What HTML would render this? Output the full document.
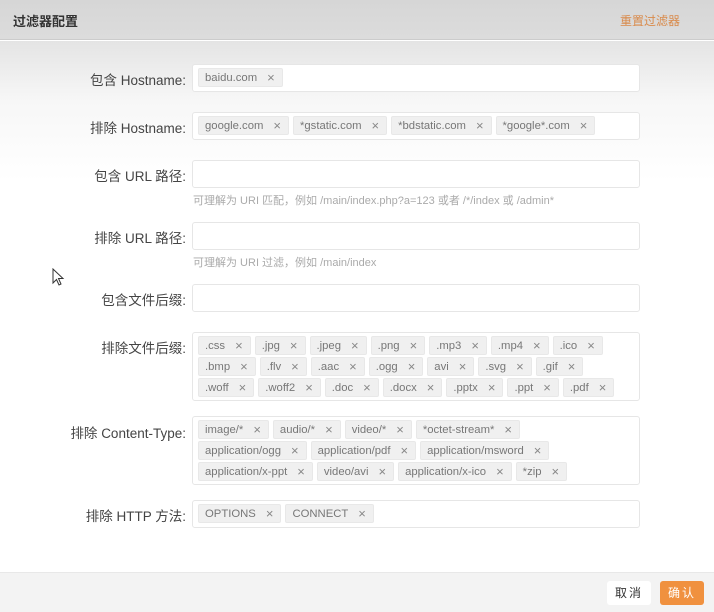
<!DOCTYPE html>
<html><head><meta charset="utf-8"><style>
*{box-sizing:border-box;margin:0;padding:0}
body{width:714px;height:612px;overflow:hidden;font-family:"Liberation Sans","Noto Sans CJK SC",sans-serif;background:#fff;position:relative;color:#444}
.hdr{position:absolute;left:0;top:0;width:714px;height:40px;background:linear-gradient(#d6d6d6,#dcdcdc);border-bottom:1px solid #ccc}
.hdr .t{position:absolute;left:13px;top:11px;font-size:13px;color:#333;font-weight:bold}
.hdr .r{position:absolute;right:34px;top:12px;font-size:12px;color:#d98a4a}
.bg{position:absolute;left:0;top:41px;width:714px;height:531px;background:linear-gradient(#e4e4e4 0px,#f7f7f7 60px,#fff 140px)}
.lab{position:absolute;right:528px;font-size:13.5px;color:#444;white-space:nowrap}
.box{position:absolute;left:192px;width:448px;border:1px solid #e6e6e6;border-radius:3px;background:#fff;padding:0 5px}
.row{display:flex;gap:4px;height:19px;margin-top:2px}
.row:first-child{margin-top:3px}
.tag{display:inline-flex;align-items:center;height:19px;padding:0 7px 0 6px;background:#f0f0f0;border:1px solid #e8e8e8;border-radius:2px;font-size:11.3px;color:#777;white-space:nowrap}
.tag:after{content:"\00d7";margin-left:10px;font-size:13px;color:#888}
.hint{position:absolute;left:193px;font-size:11px;color:#aaa}
.ft{position:absolute;left:0;top:572px;width:714px;height:40px;background:#f3f3f3;border-top:1px solid #e8e8e8}
.b{position:absolute;top:581px;height:24px;width:44px;font-size:12px;text-align:center;line-height:24px;border-radius:3px;letter-spacing:2px}
</style></head><body>
<div class="hdr"><div class="t">过滤器配置</div><div class="r">重置过滤器</div></div>
<div class="bg"></div>
<svg style="position:absolute;left:52px;top:268px" width="14" height="20" viewBox="0 0 14 20"><path d="M1 1 L1 15 L4.5 11.5 L7 17 L9 16 L6.5 10.5 L11 10.5 Z" fill="#fff" stroke="#333" stroke-width="1"/></svg>

<div class="lab" style="top:69px">包含 Hostname:</div>
<div class="box" style="top:64px;height:28px"><div class="row"><span class="tag">baidu.com</span></div></div>

<div class="lab" style="top:117px">排除 Hostname:</div>
<div class="box" style="top:112px;height:28px"><div class="row"><span class="tag">google.com</span><span class="tag">*gstatic.com</span><span class="tag">*bdstatic.com</span><span class="tag">*google*.com</span></div></div>

<div class="lab" style="top:165px">包含 URL 路径:</div>
<div class="box" style="top:160px;height:28px"></div>
<div class="hint" style="top:192px">可理解为 URI 匹配，例如 /main/index.php?a=123 或者 /*/index 或 /admin*</div>

<div class="lab" style="top:227px">排除 URL 路径:</div>
<div class="box" style="top:222px;height:28px"></div>
<div class="hint" style="top:254px">可理解为 URI 过滤，例如 /main/index</div>

<div class="lab" style="top:289px">包含文件后缀:</div>
<div class="box" style="top:284px;height:28px"></div>

<div class="lab" style="top:337px">排除文件后缀:</div>
<div class="box" style="top:332px;height:69px">
<div class="row"><span class="tag">.css</span><span class="tag">.jpg</span><span class="tag">.jpeg</span><span class="tag">.png</span><span class="tag">.mp3</span><span class="tag">.mp4</span><span class="tag">.ico</span></div>
<div class="row"><span class="tag">.bmp</span><span class="tag">.flv</span><span class="tag">.aac</span><span class="tag">.ogg</span><span class="tag">avi</span><span class="tag">.svg</span><span class="tag">.gif</span></div>
<div class="row"><span class="tag">.woff</span><span class="tag">.woff2</span><span class="tag">.doc</span><span class="tag">.docx</span><span class="tag">.pptx</span><span class="tag">.ppt</span><span class="tag">.pdf</span></div>
</div>

<div class="lab" style="top:422px">排除 Content-Type:</div>
<div class="box" style="top:416px;height:69px">
<div class="row"><span class="tag">image/*</span><span class="tag">audio/*</span><span class="tag">video/*</span><span class="tag">*octet-stream*</span></div>
<div class="row"><span class="tag">application/ogg</span><span class="tag">application/pdf</span><span class="tag">application/msword</span></div>
<div class="row"><span class="tag">application/x-ppt</span><span class="tag">video/avi</span><span class="tag">application/x-ico</span><span class="tag">*zip</span></div>
</div>

<div class="lab" style="top:505px">排除 HTTP 方法:</div>
<div class="box" style="top:500px;height:28px"><div class="row"><span class="tag">OPTIONS</span><span class="tag">CONNECT</span></div></div>

<div class="ft"></div>
<div class="b" style="left:607px;background:#fff;color:#333">取消</div>
<div class="b" style="left:660px;background:#f0913f;color:#fff">确认</div>
</body></html>
